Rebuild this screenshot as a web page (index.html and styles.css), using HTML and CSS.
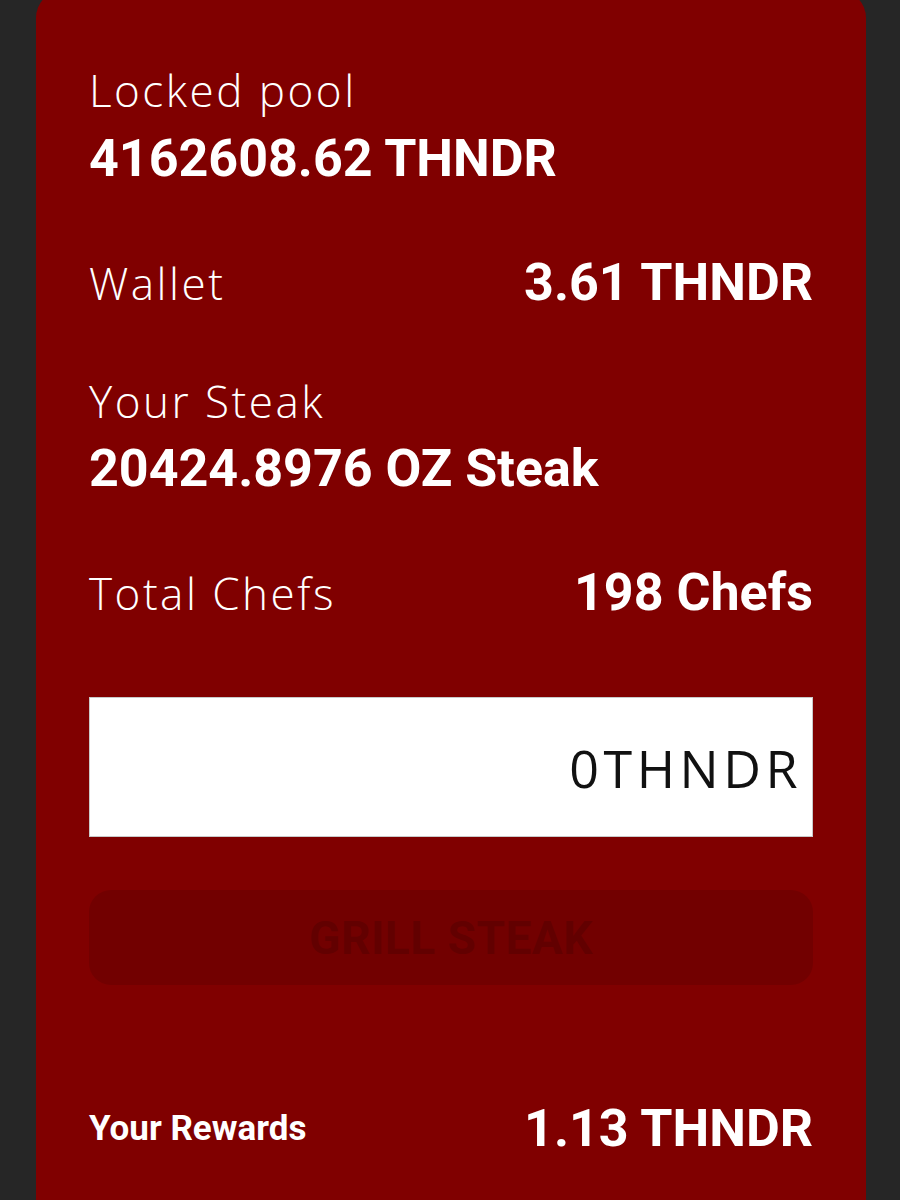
FILE: index.html
```
<!DOCTYPE html>
<html lang="en">
  <head>
    <meta charset="UTF-8" />
    <meta name="viewport" content="width=device-width, initial-scale=1.0" />
    <title>Grill Steak</title>
    <link rel="stylesheet" href="styles.css">
  </head>
  <body>
    <main class="card">
      <div class="stat stacked">
        <span class="label">Locked pool</span>
        <span class="value">4162608.62 THNDR</span>
      </div>

      <div class="stat inline wallet">
        <span class="label">Wallet</span>
        <span class="value">3.61 THNDR</span>
      </div>

      <div class="stat stacked steak">
        <span class="label">Your Steak</span>
        <span class="value">20424.8976 OZ Steak</span>
      </div>

      <div class="stat inline chefs">
        <span class="label">Total Chefs</span>
        <span class="value">198 Chefs</span>
      </div>

      <div class="amountBox">
        <input class="amount" type="text" value="0THNDR" />
      </div>

      <button class="grillBtn" disabled>Grill Steak</button>

      <div class="stat inline rewards">
        <span class="label small">Your Rewards</span>
        <span class="value">1.13 THNDR</span>
      </div>
    </main>
  </body>
</html>
```

FILE: styles.css
```
* {
  margin: 0;
  padding: 0;
  box-sizing: border-box;
}

body {
  background: #262626;
  min-height: 1200px;
  overflow: hidden;
}

.card {
  margin: -10px 34px 0 36px;
  height: 1260px;
  padding: 78px 53px 0 53px;
  background: #800000;
  border-radius: 28px;
  color: #fff;
}

.stat {
  display: flex;
}

.stacked {
  flex-direction: column;
  align-items: flex-start;
  gap: 21px;
}

.inline {
  justify-content: space-between;
  align-items: center;
}

.label {
  font-family: "Open Sans", sans-serif;
  font-weight: 300;
  font-size: 44px;
  line-height: 44px;
  letter-spacing: 2.5px;
}

.label.small {
  font-family: Roboto, sans-serif;
  font-weight: 700;
  font-size: 35px;
  letter-spacing: 0;
}

.value {
  font-family: Roboto, sans-serif;
  font-weight: 700;
  font-size: 52px;
  line-height: 52px;
}

.wallet {
  margin-top: 72px;
}

.steak {
  margin-top: 70px;
  gap: 20px;
}

.chefs {
  margin-top: 72px;
}

.amountBox {
  margin-top: 78px;
}

.amount {
  display: block;
  width: 100%;
  height: 140px;
  padding: 0 10px;
  border: 1px solid #c9c9c9;
  background: #fff;
  text-align: right;
  font-family: "Open Sans", sans-serif;
  font-size: 52px;
  letter-spacing: 4.5px;
  color: #111;
  outline: none;
}

.grillBtn {
  display: block;
  width: 100%;
  height: 95px;
  margin-top: 53px;
  border: none;
  border-radius: 22px;
  background: #720000;
  color: #620000;
  font-family: Roboto, sans-serif;
  font-weight: 700;
  font-size: 46px;
  letter-spacing: 0.5px;
  text-transform: uppercase;
}

.rewards {
  margin-top: 118px;
}
```
